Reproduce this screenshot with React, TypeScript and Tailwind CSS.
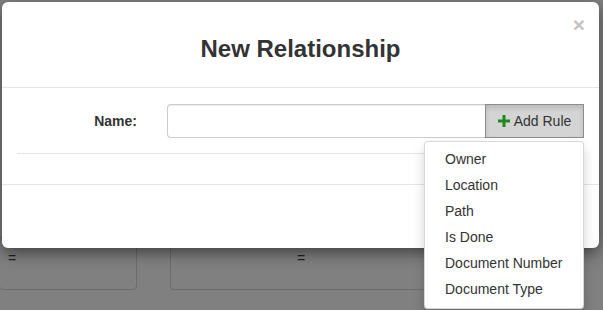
import React from 'react';

const ruleOptions = ['Owner', 'Location', 'Path', 'Is Done', 'Document Number', 'Document Type'];

const App: React.FC = () => {
  return (
    <div className="relative w-[603px] h-[310px] overflow-hidden bg-[#808080] font-['Liberation_Sans',Arial,sans-serif] text-[14px] text-[#333]">
      {/* page behind the backdrop */}
      <div className="flex gap-[33px] pt-[236px]">
        <div className="w-[138px] h-[54px] shrink-0 -ml-px border border-[#6c6c6c] rounded-[4px] pt-[13px] pl-[8px] text-[#222] leading-[16px]">
          =
        </div>
        <div className="w-[262px] h-[54px] shrink-0 border border-[#6c6c6c] rounded-[4px] pt-[13px] text-center text-[#222] leading-[16px]">
          =
        </div>
      </div>

      {/* modal */}
      <div className="absolute left-[2px] top-[2px] w-[597px] h-[246px] bg-white rounded-[6px] shadow-[0_5px_15px_rgba(0,0,0,0.5)] flex flex-col">
        <div className="relative h-[86px] shrink-0 border-b border-[#e5e5e5] flex items-center justify-center pt-[8px]">
          <h4 className="text-[24px] font-bold leading-[26px] text-[#333]">New Relationship</h4>
          <span className="absolute right-[14px] top-[12px] text-[21px] font-bold leading-[21px] text-[#c4c4c4]">×</span>
        </div>

        <div className="h-[96px] shrink-0 px-[15px] pt-[16px]">
          <div className="flex items-center h-[34px]">
            <label className="w-[120px] shrink-0 text-right font-bold">Name:</label>
            <div className="ml-[30px] flex flex-1 h-[34px]">
              <input
                type="text"
                className="flex-1 min-w-0 h-full border border-[#ccc] border-r-0 rounded-l-[4px] px-[12px] outline-none shadow-[inset_0_1px_1px_rgba(0,0,0,0.075)]"
              />
              <div className="relative">
                <button className="w-[99px] h-full flex items-center justify-center gap-[4px] bg-[#d4d4d4] border border-[#8c8c8c] text-[#333] shadow-[inset_0_3px_5px_rgba(0,0,0,0.125)]">
                  <svg width="12" height="12" viewBox="0 0 12 12">
                    <path d="M4.5 0h3v4.5H12v3H7.5V12h-3V7.5H0v-3h4.5z" fill="#1f8a1f" />
                  </svg>
                  <span>Add Rule</span>
                </button>
                <ul className="absolute right-0 top-[37px] w-[160px] pt-[4px] pb-[6px] bg-white border border-[rgba(0,0,0,0.15)] rounded-[4px] shadow-[0_6px_12px_rgba(0,0,0,0.175)] z-10">
                  {ruleOptions.map((opt) => (
                    <li key={opt} className="px-[20px] h-[26px] leading-[26px] whitespace-nowrap text-[#333]">
                      {opt}
                    </li>
                  ))}
                </ul>
              </div>
            </div>
          </div>
          <hr className="mt-[15px] border-t border-[#e5e5e5]" />
        </div>

        <div className="flex-1 border-t border-[#e5e5e5] px-[15px] pt-[15px] flex justify-end">
          <button className="h-[34px] px-[12px] rounded-[4px] bg-[#337ab7] border border-[#2e6da4] text-white">
            Save
          </button>
        </div>
      </div>
    </div>
  );
};

export default App;
